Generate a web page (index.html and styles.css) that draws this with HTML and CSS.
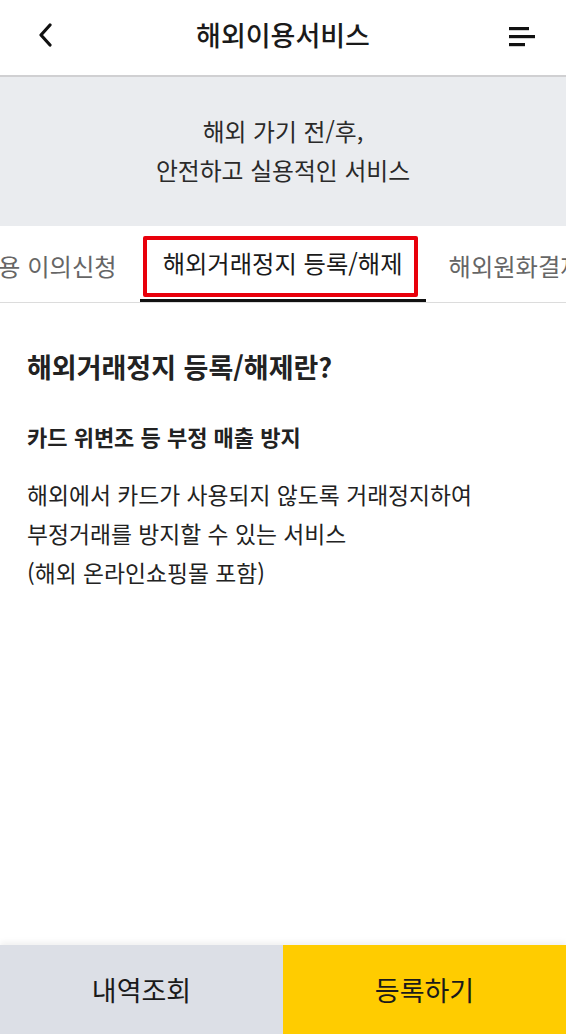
FILE: index.html
```html
<!DOCTYPE html>
<html lang="ko">
<head>
  <meta charset="UTF-8">
  <meta name="viewport" content="width=device-width, initial-scale=1.0">
  <title>해외이용서비스</title>
  <link rel="stylesheet" href="styles.css">
</head>
<body>
  <div class="page">
    <header class="top-bar">
      <button class="icon-btn" aria-label="뒤로">
        <svg width="24" height="24" viewBox="0 0 24 24">
          <path d="M16 2 L7 12 L16 22" fill="none" stroke="#111" stroke-width="3.2" stroke-linecap="round" stroke-linejoin="round"/>
        </svg>
      </button>
      <h1 class="top-title">해외이용서비스</h1>
      <button class="icon-btn" aria-label="메뉴">
        <svg width="28" height="24" viewBox="0 0 28 24">
          <rect x="1" y="4" width="20" height="3.2" fill="#111"/>
          <rect x="1" y="12" width="26" height="3.2" fill="#111"/>
          <rect x="1" y="20" width="16" height="3.2" fill="#111"/>
        </svg>
      </button>
    </header>

    <section class="banner">
      <p>해외 가기 전/후,<br>안전하고 실용적인 서비스</p>
    </section>

    <nav class="tabs">
      <div class="tab-track">
        <a class="tab">해외이용 이의신청</a>
        <a class="tab active">해외거래정지 등록/해제<span class="mark"></span></a>
        <a class="tab">해외원화결제 차단</a>
      </div>
    </nav>

    <main class="content">
      <h2>해외거래정지 등록/해제란?</h2>
      <h3>카드 위변조 등 부정 매출 방지</h3>
      <p>해외에서 카드가 사용되지 않도록 거래정지하여<br>부정거래를 방지할 수 있는 서비스<br>(해외 온라인쇼핑몰 포함)</p>
    </main>

    <footer class="bottom-bar">
      <button class="btn btn-gray">내역조회</button>
      <button class="btn btn-yellow">등록하기</button>
    </footer>
  </div>
</body>
</html>
```

FILE: styles.css
```css
* {
  box-sizing: border-box;
}

body {
  margin: 0;
  font-family: "Noto Sans CJK KR", "Noto Sans", sans-serif;
  color: #222;
  background: #fff;
}

.page {
  height: 1034px;
  display: flex;
  flex-direction: column;
}

.top-bar {
  height: 77px;
  display: flex;
  align-items: center;
  justify-content: space-between;
  padding: 0 30px 6px 34px;
  border-bottom: 2px solid #d0d0d2;
}

.icon-btn {
  background: none;
  border: none;
  padding: 0;
  display: flex;
}

.top-title {
  margin: 0;
  font-size: 27px;
  font-weight: 500;
  color: #1a1a1a;
}

.banner {
  height: 149px;
  background: #eaecef;
  display: flex;
  align-items: center;
  justify-content: center;
}

.banner p {
  margin: 0 0 4px;
  text-align: center;
  font-size: 23.8px;
  line-height: 39px;
  color: #2a2a2a;
}

.tabs {
  height: 77px;
  border-bottom: 1px solid #dcdcdc;
  overflow: hidden;
}

.tab-track {
  display: flex;
  height: 100%;
  margin-left: -92px;
}

.tab {
  position: relative;
  flex-shrink: 0;
  display: flex;
  align-items: center;
  padding: 2px 23px 0;
  font-size: 24.3px;
  color: #666;
  white-space: nowrap;
}

.tab.active {
  color: #1a1a1a;
  border-bottom: 3px solid #111;
  padding-top: 0;
}

/* highlight box drawn over the selected tab */
.tab .mark {
  position: absolute;
  left: 3px;
  right: 8px;
  top: 10px;
  bottom: 2px;
  border: 4px solid #e8000b;
  border-radius: 2px;
}

.content {
  flex: 1;
  padding: 46px 27px 0;
}

.content h2 {
  margin: 0 0 36px;
  font-size: 27px;
  font-weight: 700;
  line-height: 36px;
}

.content h3 {
  margin: 0 0 24px;
  font-size: 22px;
  font-weight: 700;
  line-height: 30px;
}

.content p {
  margin: 0;
  font-size: 22.8px;
  line-height: 39px;
  color: #222;
}

.bottom-bar {
  height: 89px;
  display: flex;
  box-shadow: 0 -3px 6px rgba(0, 0, 0, 0.06);
}

.btn {
  flex: 1;
  border: none;
  font-family: inherit;
  font-size: 27px;
  color: #1a1a1a;
  padding-bottom: 2px;
}

.btn-gray {
  background: #dcdfe6;
}

.btn-yellow {
  background: #ffcc00;
}
```
